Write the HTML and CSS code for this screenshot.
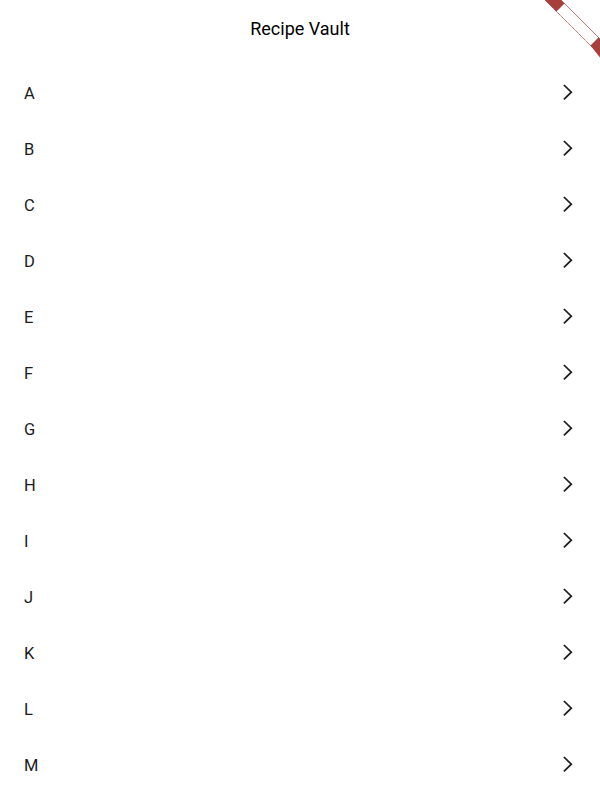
FILE: index.html
```html
<!DOCTYPE html>
<html lang="en">
<head>
<meta charset="utf-8">
<title>Recipe Vault</title>
<link rel="stylesheet" href="styles.css">
</head>
<body>
<div class="app">
  <header class="appbar"><h1 class="title">Recipe Vault</h1></header>
  <ul class="list">
    <li class="row"><span class="label">A</span><svg class="chev" viewBox="0 0 24 24"><path d="M8.5 4.6L15.3 11.2 8.5 17.8"/></svg></li>
    <li class="row"><span class="label">B</span><svg class="chev" viewBox="0 0 24 24"><path d="M8.5 4.6L15.3 11.2 8.5 17.8"/></svg></li>
    <li class="row"><span class="label">C</span><svg class="chev" viewBox="0 0 24 24"><path d="M8.5 4.6L15.3 11.2 8.5 17.8"/></svg></li>
    <li class="row"><span class="label">D</span><svg class="chev" viewBox="0 0 24 24"><path d="M8.5 4.6L15.3 11.2 8.5 17.8"/></svg></li>
    <li class="row"><span class="label">E</span><svg class="chev" viewBox="0 0 24 24"><path d="M8.5 4.6L15.3 11.2 8.5 17.8"/></svg></li>
    <li class="row"><span class="label">F</span><svg class="chev" viewBox="0 0 24 24"><path d="M8.5 4.6L15.3 11.2 8.5 17.8"/></svg></li>
    <li class="row"><span class="label">G</span><svg class="chev" viewBox="0 0 24 24"><path d="M8.5 4.6L15.3 11.2 8.5 17.8"/></svg></li>
    <li class="row"><span class="label">H</span><svg class="chev" viewBox="0 0 24 24"><path d="M8.5 4.6L15.3 11.2 8.5 17.8"/></svg></li>
    <li class="row"><span class="label">I</span><svg class="chev" viewBox="0 0 24 24"><path d="M8.5 4.6L15.3 11.2 8.5 17.8"/></svg></li>
    <li class="row"><span class="label">J</span><svg class="chev" viewBox="0 0 24 24"><path d="M8.5 4.6L15.3 11.2 8.5 17.8"/></svg></li>
    <li class="row"><span class="label">K</span><svg class="chev" viewBox="0 0 24 24"><path d="M8.5 4.6L15.3 11.2 8.5 17.8"/></svg></li>
    <li class="row"><span class="label">L</span><svg class="chev" viewBox="0 0 24 24"><path d="M8.5 4.6L15.3 11.2 8.5 17.8"/></svg></li>
    <li class="row"><span class="label">M</span><svg class="chev" viewBox="0 0 24 24"><path d="M8.5 4.6L15.3 11.2 8.5 17.8"/></svg></li>
  </ul>
  <svg class="banner" viewBox="0 0 60 60" aria-hidden="true">
    <polygon points="5,0 21,0 60,39 60,55" fill="#fff" stroke="#b0524e" stroke-width="0.8"/>
    <line x1="13" y1="8" x2="55" y2="50" stroke="#e8c8c6" stroke-width="0.6" stroke-dasharray="2 3"/>
    <polygon points="3,0 21,0 24.5,3.5 16.5,11.5 3,-2" fill="#a73f3a"/>
    <polygon points="58.5,37.5 62,41 62,60 50.5,45.5" fill="#a73f3a"/>
  </svg>
</div>
</body>
</html>
```
FILE: styles.css
```css
html, body {
  margin: 0;
  padding: 0;
  background: #ffffff;
}
body {
  font-family: Roboto, "Noto Sans", "Liberation Sans", sans-serif;
  color: #1d1b20;
  width: 600px;
  height: 800px;
  overflow: hidden;
}
.app {
  position: relative;
  width: 600px;
  height: 800px;
  overflow: hidden;
}
.appbar {
  height: 56px;
  display: flex;
  align-items: center;
  justify-content: center;
}
.title {
  margin: 0;
  font-size: 18px;
  font-weight: 400;
  color: #000000;
  letter-spacing: 0;
}
.list {
  list-style: none;
  margin: 0;
  padding: 9px 0 0 0;
}
.row {
  height: 56px;
  display: flex;
  align-items: center;
  justify-content: space-between;
  padding: 0 20px 0 24px;
}
.label {
  font-size: 16.5px;
  color: #1d1b20;
}
.chev {
  width: 24px;
  height: 24px;
  fill: none;
  stroke: #1d1b20;
  stroke-width: 1.7;
  stroke-linecap: square;
  stroke-linejoin: miter;
}
.banner {
  position: absolute;
  top: 0;
  right: 0;
  width: 60px;
  height: 60px;
}
```
